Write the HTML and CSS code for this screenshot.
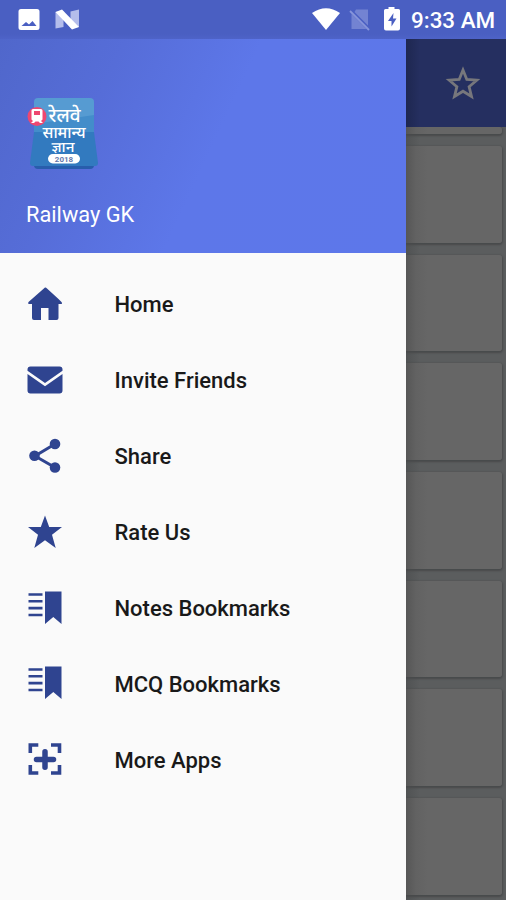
FILE: index.html
```html
<!DOCTYPE html>
<html lang="en">
<head>
<meta charset="utf-8">
<title>Railway GK</title>
<link rel="stylesheet" href="styles.css">
</head>
<body>
<div class="screen">
  <header class="status">
    <svg class="status-left" width="90" height="38" viewBox="0 0 90 38">
      <path fill="#fff" fill-rule="evenodd" d="M21 9h16q2.500 0 2.500 2.500v16q0 2.500-2.500 2.500H21q-2.500 0-2.500-2.500v-16Q18.500 9 21 9ZM21.500 26h15l-4-5-3.500 3.500-3-2.500Z"/>
      <path fill="#b4bdeb" d="M55.500 12l8-1v16l-8 1.500ZM70.500 11.500l8.500-2v17.500l-8.500 1Z"/>
      <path fill="#fff" d="M55.500 12l6.500-2.500 17 17.500-7 2.500Z"/>
    </svg>
    <svg class="status-right" width="96" height="38" viewBox="310 0 96 38">
      <path fill="#fff" d="M312 13q14-9.500 28 0L326 30Z"/>
      <path fill="#7383d2" d="M356 9.500h12v16L354.500 12ZM351.500 14l15 15h-15Z"/>
      <path stroke="#8795da" stroke-width="1.800" d="M350 11l19 19"/>
      <path fill="#fff" fill-rule="evenodd" d="M388.500 7h6v2h4q1.500 0 1.500 1.500v18q0 2-2 2h-12q-2 0-2-2v-18q0-1.500 1.500-1.500h3ZM393.500 13l-5.500 8h3.500v5.500l5-8h-3.500Z"/>
    </svg>
    <span class="clock">9:33 AM</span>
  </header>
  <div class="main">
    <aside class="drawer">
      <div class="profile">
        <svg class="logo" width="74" height="76" viewBox="26 96 74 76">
          <path fill="#285dac" d="M34 160h60v5q0 4-4 4H38q-4 0-4-4Z"/>
          <path fill="#569bd2" d="M38 98h52q4 0 4 4v35H34v-35q0-4 4-4Z"/>
          <path fill="#438dca" d="M34 124l60-9v19H34Z"/>
          <path fill="#327abf" d="M34 132h60l4 31q0 3-3 3H33q-3 0-3-3Z"/>
          <circle cx="37" cy="116.500" r="9.500" fill="#ee4770"/>
          <path fill="#fff" fill-rule="evenodd" d="M33 109h8q1.500 0 1.500 1.500v9L41 121l2 2h-3l-1.500-1.500h-3L34 123h-3l2-2-1.500-1.500v-9Q31.500 109 33 109ZM34 111v4h6v-4Z"/>
          <g class="logo-text">
            <text x="64.500" y="122" font-size="19" textLength="32" lengthAdjust="spacingAndGlyphs">रेलवे</text>
            <text x="64" y="138" font-size="16" textLength="43" lengthAdjust="spacingAndGlyphs">सामान्य</text>
            <text x="63" y="151.500" font-size="14" textLength="23" lengthAdjust="spacingAndGlyphs">ज्ञान</text>
          </g>
          <rect x="48" y="154" width="32" height="9.500" rx="4.750" fill="#fff"/>
          <text class="logo-year" x="64" y="161.500">2018</text>
        </svg>
        <div class="name">Railway GK</div>
      </div>
      <nav class="menu">
        <a class="item"><svg viewBox="0 0 36 36"><path d="M18 1.500L1.500 16q-1 2 1 2H5v14q0 2 2 2h7V22h7.500v12H29.500q2 0 2-2V18H33.500q2.500 0 1-2L31.500 13 20 2.500Q18.800 1 18 1.500Z"/></svg><span>Home</span></a>
        <a class="item"><svg viewBox="0 0 36 36"><path d="M3.500 4.500h29q3 0 3 3v1.200L18 21 .5 8.700V7.500q0-3 3-3ZM.5 12L18 24.200 35.500 12v16.500q0 3-3 3h-29q-3 0-3-3Z"/></svg><span>Invite Friends</span></a>
        <a class="item"><svg viewBox="0 0 36 36"><path class="line" d="M28 6L8 18l20 11.500"/><circle cx="28" cy="6" r="5.300"/><circle cx="7.500" cy="17.800" r="5.300"/><circle cx="28" cy="29.500" r="5.300"/></svg><span>Share</span></a>
        <a class="item"><svg viewBox="0 0 36 36"><path d="M18 1.500l4.200 11.500H35L25 20.800 28.700 34 18 26.200 7.300 34 11 20.800 1 13h12.800Z"/></svg><span>Rate Us</span></a>
        <a class="item"><svg viewBox="0 0 36 36"><path d="M18 1.500H34.500v32.500L26.300 27l-8.300 7ZM1.500 3.200h14v2.600h-14ZM1.500 10h14v2.600h-14ZM1.500 16.800h14v2.600h-14ZM1.500 23.700h14v2.600h-14Z"/></svg><span>Notes Bookmarks</span></a>
        <a class="item"><svg viewBox="0 0 36 36"><path d="M18 1.500H34.500v32.500L26.300 27l-8.300 7ZM1.500 3.200h14v2.600h-14ZM1.500 10h14v2.600h-14ZM1.500 16.800h14v2.600h-14ZM1.500 23.700h14v2.600h-14Z"/></svg><span>MCQ Bookmarks</span></a>
        <a class="item"><svg viewBox="0 0 36 36"><path class="frame" d="M3.300 12V4h8M24 4h8.500v8M32.500 24v8H24M11.300 32h-8v-8"/><path class="plus" d="M18 10.700v15.600M9.500 18.500h17"/></svg><span>More Apps</span></a>
      </nav>
    </aside>
    <section class="page">
      <div class="toolbar">
        <svg width="36" height="36" viewBox="0 0 36 36"><path fill="none" stroke="#77777c" stroke-width="2.800" d="M18 5l3.800 9.400 10 .8-7.700 6.500L26.500 31.500 18 26.200 9.500 31.500l2.400-9.800L4.200 15.200l10-.8Z"/></svg>
      </div>
      <div class="list">
        <div class="card first"></div>
        <div class="card"></div><div class="card"></div><div class="card"></div><div class="card"></div>
        <div class="card"></div><div class="card"></div><div class="card"></div>
      </div>
    </section>
  </div>
</div>
</body>
</html>
```
FILE: styles.css
```css
* { box-sizing: border-box; }
body { margin: 0; font-family: Roboto, "Noto Sans", sans-serif; }
.screen { width: 506px; height: 900px; overflow: hidden; display: flex; flex-direction: column; }
.status {
  height: 39px;
  flex: none;
  display: flex;
  align-items: flex-start;
  background: linear-gradient(#4a5fc2 0, #4a5fc2 34px, #4e63c8 39px);
  color: #fff;
}
.status-right { margin-left: 220px; }
.clock { margin-left: 5px; font-size: 22.4px; line-height: 41px; font-weight: 500; white-space: nowrap; }
.main { flex: 1; min-height: 0; display: flex; }
.drawer { width: 406px; flex: none; background: #fafafa; }
.profile {
  height: 214px;
  padding: 57px 26px 0;
  background: linear-gradient(115deg, #5067cb 0%, #566dd8 25%, #5d77e9 52%, #5d77ea 100%);
  color: #fff;
}
.logo { display: block; }
.logo-text { fill: #fff; text-anchor: middle; font-family: "Noto Sans Devanagari", "Noto Sans", sans-serif; font-weight: 500; }
.logo-year { font-size: 8px; font-weight: 700; fill: #6579ac; text-anchor: middle; }
.name { margin-top: 30px; font-size: 21.8px; line-height: 26px; }
.menu { padding-top: 14px; }
.item { height: 75.9px; padding-left: 27px; display: flex; align-items: center; color: #191919; font-size: 22px; font-weight: 500; }
.item svg { width: 36px; height: 36px; margin: 0 51.5px 2px 0; fill: #2f4490; flex: none; }
.item .line { fill: none; stroke: #2f4490; stroke-width: 3; }
.item .frame { fill: none; stroke: #2f4490; stroke-width: 3.6; }
.item .plus { fill: none; stroke: #2f4490; stroke-width: 5.5; stroke-linecap: round; }
.page {
  flex: 1;
  min-width: 0;
  display: flex;
  flex-direction: column;
  background: linear-gradient(90deg, #505253, #5b5d5e 14px);
}
.toolbar {
  height: 88px;
  flex: none;
  padding: 26px 0 0 39px;
  background: linear-gradient(90deg, #1e2750, #252f60 14px);
}
.list { flex: 1; min-height: 0; overflow: hidden; }
.card {
  height: 96.7px;
  margin: 0 4px 12px 0;
  border-radius: 0 3px 3px 0;
  background: linear-gradient(90deg, #565656, #626262 10px, #666 22px);
  box-shadow: 0 1px 2px 1px #484a4b;
}
.card.first { height: 7px; }
```
